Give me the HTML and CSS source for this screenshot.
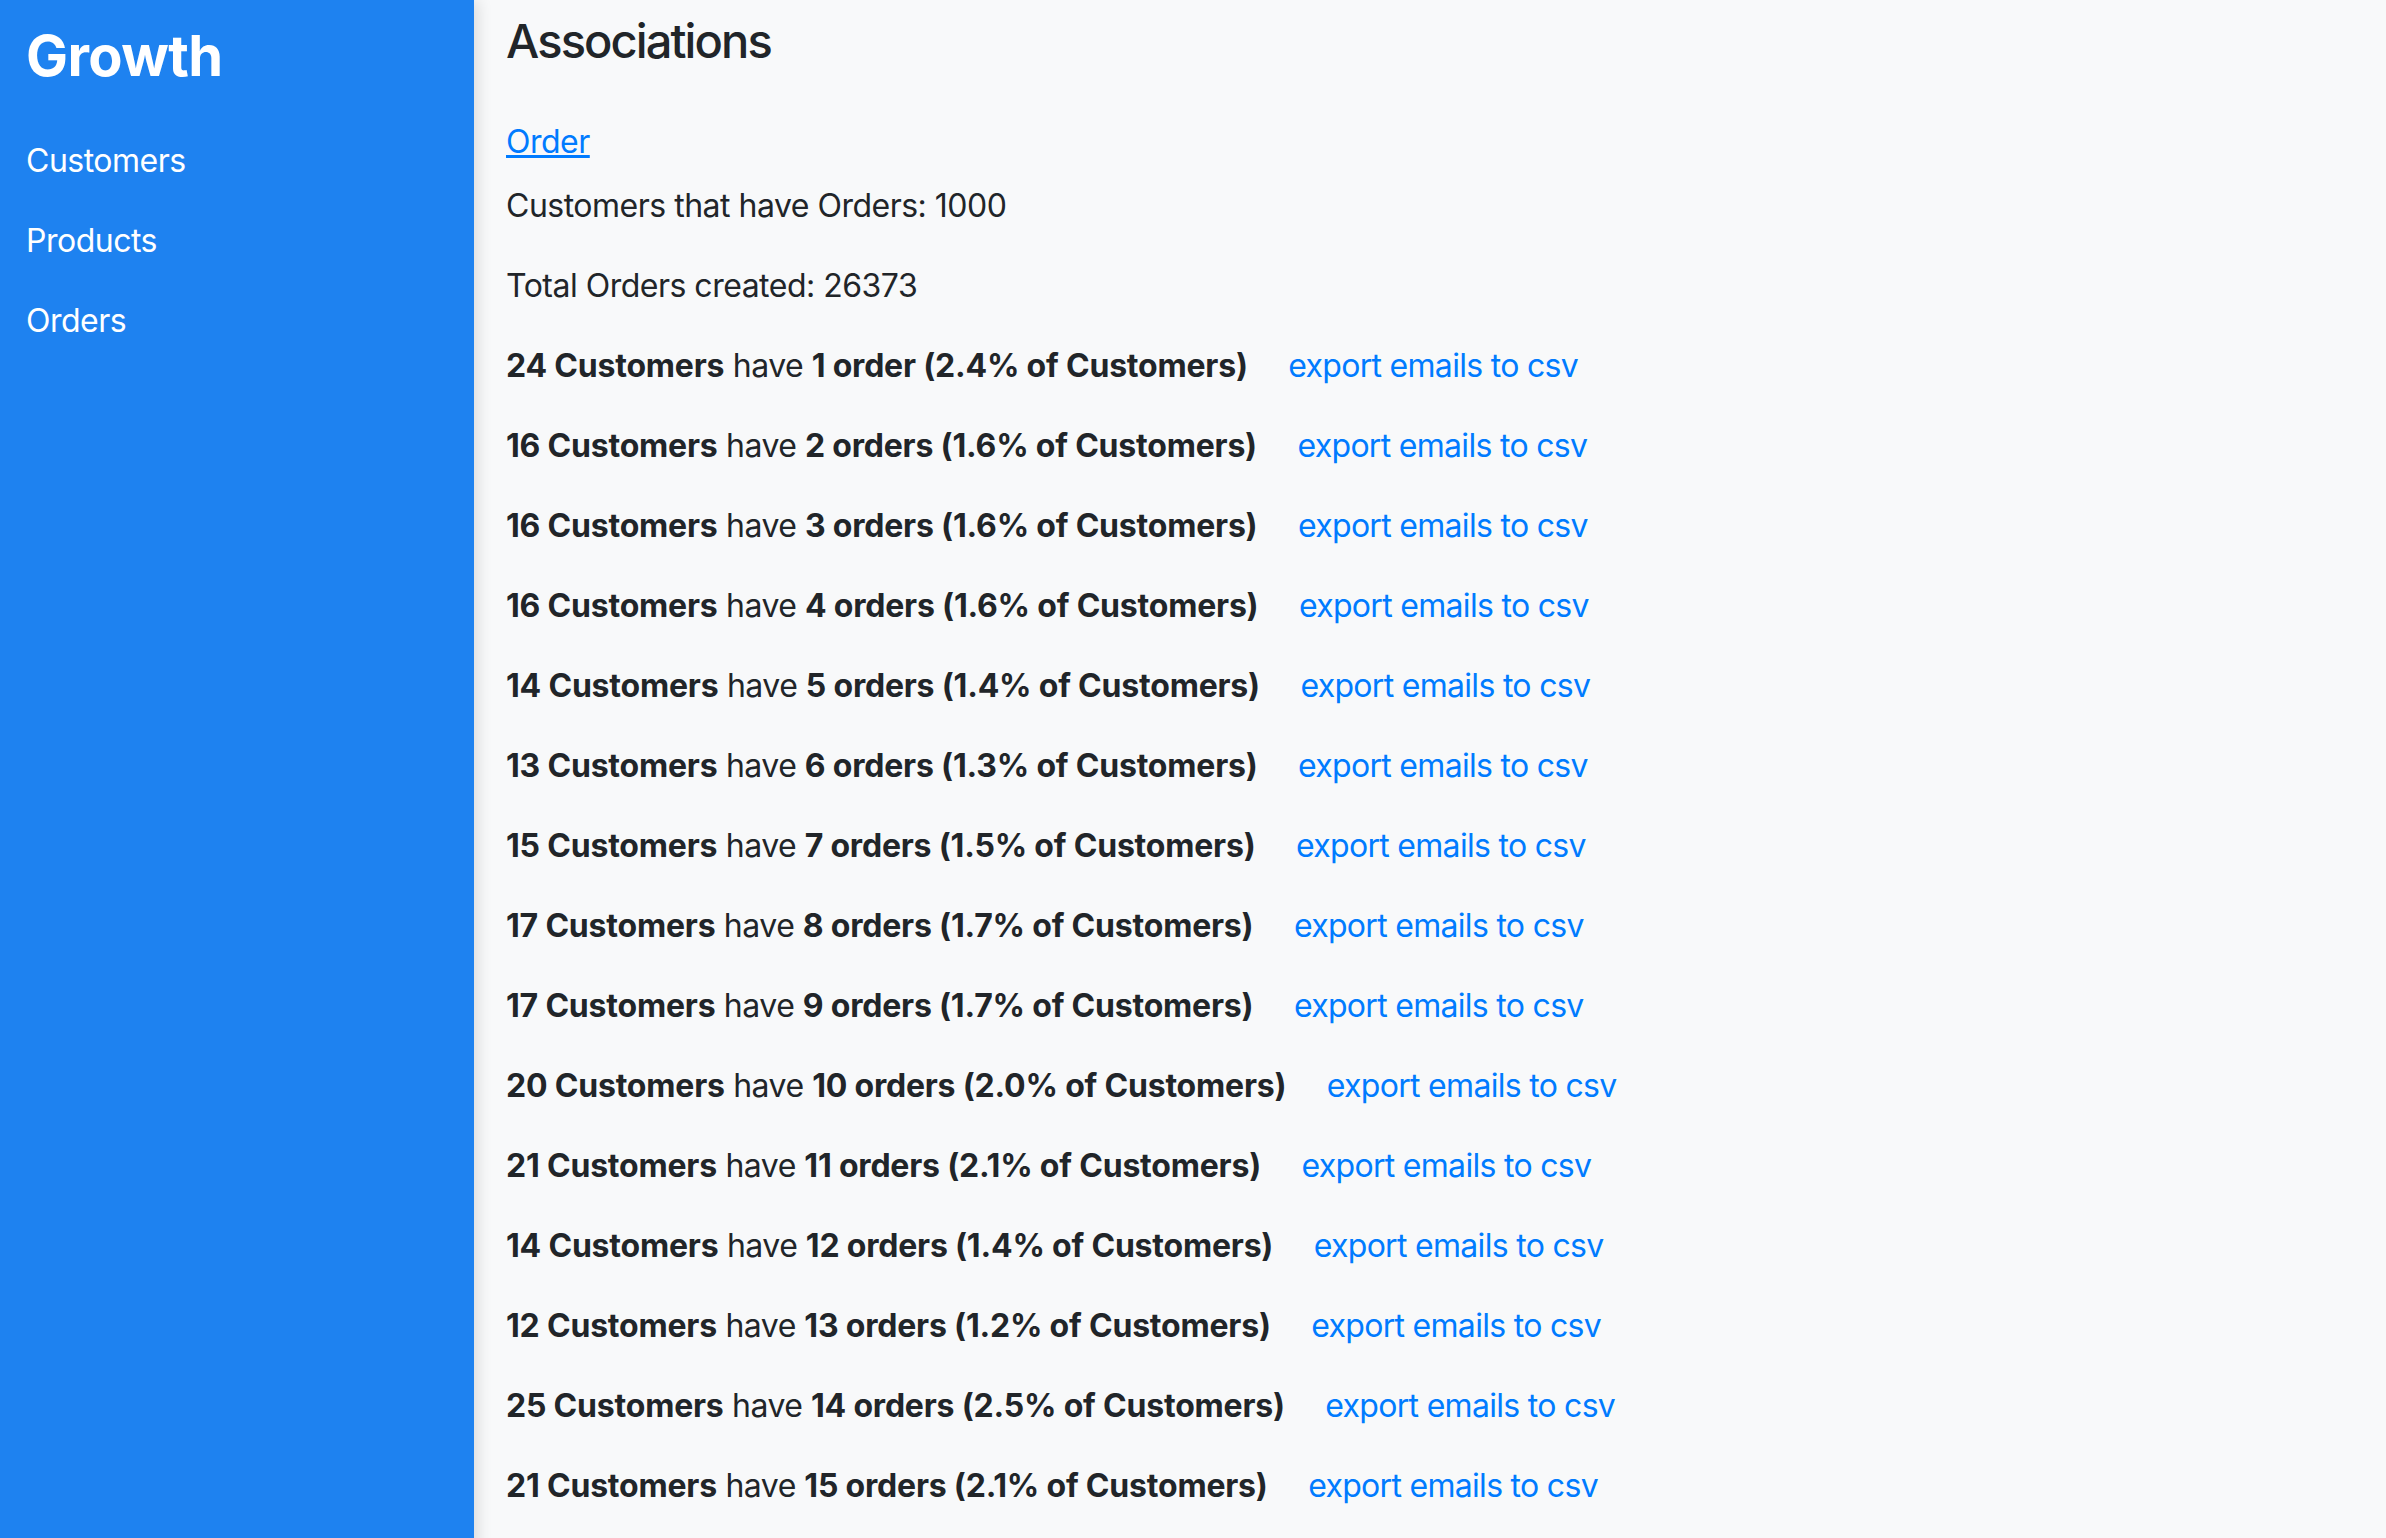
FILE: index.html
```html
<!DOCTYPE html>
<html>
<head>
<meta charset="utf-8">
<title>Growth</title>
<link rel="stylesheet" href="styles.css">
</head>
<body>
<div class="layout">
  <nav class="sidebar">
    <h1 class="brand">Growth</h1>
    <ul class="nav">
      <li><a href="#">Customers</a></li>
      <li><a href="#">Products</a></li>
      <li><a href="#">Orders</a></li>
    </ul>
  </nav>
  <main class="main">
    <h3 class="title">Associations</h3>
    <div class="assoc"><a href="#" class="assoc-link">Order</a></div>
    <p>Customers that have Orders: 1000</p>
    <p>Total Orders created: 26373</p>
    <p><b>24 Customers</b> have <b>1 order (2.4% of Customers)</b> <a href="#" class="export">export emails to csv</a></p>
    <p><b>16 Customers</b> have <b>2 orders (1.6% of Customers)</b> <a href="#" class="export">export emails to csv</a></p>
    <p><b>16 Customers</b> have <b>3 orders (1.6% of Customers)</b> <a href="#" class="export">export emails to csv</a></p>
    <p><b>16 Customers</b> have <b>4 orders (1.6% of Customers)</b> <a href="#" class="export">export emails to csv</a></p>
    <p><b>14 Customers</b> have <b>5 orders (1.4% of Customers)</b> <a href="#" class="export">export emails to csv</a></p>
    <p><b>13 Customers</b> have <b>6 orders (1.3% of Customers)</b> <a href="#" class="export">export emails to csv</a></p>
    <p><b>15 Customers</b> have <b>7 orders (1.5% of Customers)</b> <a href="#" class="export">export emails to csv</a></p>
    <p><b>17 Customers</b> have <b>8 orders (1.7% of Customers)</b> <a href="#" class="export">export emails to csv</a></p>
    <p><b>17 Customers</b> have <b>9 orders (1.7% of Customers)</b> <a href="#" class="export">export emails to csv</a></p>
    <p><b>20 Customers</b> have <b>10 orders (2.0% of Customers)</b> <a href="#" class="export">export emails to csv</a></p>
    <p><b>21 Customers</b> have <b>11 orders (2.1% of Customers)</b> <a href="#" class="export">export emails to csv</a></p>
    <p><b>14 Customers</b> have <b>12 orders (1.4% of Customers)</b> <a href="#" class="export">export emails to csv</a></p>
    <p><b>12 Customers</b> have <b>13 orders (1.2% of Customers)</b> <a href="#" class="export">export emails to csv</a></p>
    <p><b>25 Customers</b> have <b>14 orders (2.5% of Customers)</b> <a href="#" class="export">export emails to csv</a></p>
    <p><b>21 Customers</b> have <b>15 orders (2.1% of Customers)</b> <a href="#" class="export">export emails to csv</a></p>
  </main>
</div>
</body>
</html>
```

FILE: styles.css
```css
html, body {
  margin: 0;
  padding: 0;
  height: 100%;
}
body {
  font-family: Inter, "Noto Sans", sans-serif;
  font-size: 32px;
  line-height: 48px;
  letter-spacing: -0.5px;
  color: #212529;
  background: #f8f9fa;
  overflow: hidden;
}
.layout {
  display: flex;
  min-height: 100vh;
}
.sidebar {
  width: 474px;
  flex: 0 0 474px;
  background: #1e82f0;
  padding: 22px 26px;
  box-sizing: border-box;
  box-shadow: 4px 0 14px rgba(0, 0, 0, 0.12);
  position: relative;
  z-index: 1;
}
.brand {
  margin: 0 0 31px 0;
  font-size: 56px;
  line-height: 68px;
  font-weight: 700;
  letter-spacing: -0.6px;
  color: #fff;
}
.nav {
  list-style: none;
  margin: 0;
  padding: 0;
}
.nav li {
  height: 80px;
  line-height: 80px;
}
.nav a {
  color: #fff;
  text-decoration: none;
}
.main {
  flex: 1;
  padding: 12px 32px;
}
.title {
  margin: 0 0 48px 0;
  font-size: 47px;
  line-height: 58px;
  font-weight: 500;
  letter-spacing: -1.9px;
}
.assoc {
  margin-bottom: 16px;
}
a {
  color: #007bff;
}
.assoc-link {
  text-decoration: underline;
}
p {
  margin: 0 0 32px 0;
}
b {
  font-weight: 700;
  letter-spacing: -0.2px;
}
.export {
  margin-left: 32px;
  letter-spacing: -0.7px;
  text-decoration: none;
}
```
